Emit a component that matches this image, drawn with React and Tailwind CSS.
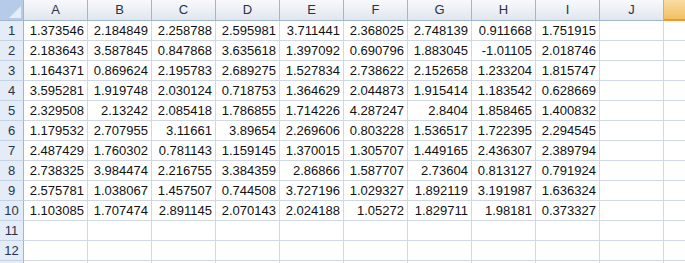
const cols = ['A', 'B', 'C', 'D', 'E', 'F', 'G', 'H', 'I', 'J'];

const data = [
  ['1.373546', '2.184849', '2.258788', '2.595981', '3.711441', '2.368025', '2.748139', '0.911668', '1.751915'],
  ['2.183643', '3.587845', '0.847868', '3.635618', '1.397092', '0.690796', '1.883045', '-1.01105', '2.018746'],
  ['1.164371', '0.869624', '2.195783', '2.689275', '1.527834', '2.738622', '2.152658', '1.233204', '1.815747'],
  ['3.595281', '1.919748', '2.030124', '0.718753', '1.364629', '2.044873', '1.915414', '1.183542', '0.628669'],
  ['2.329508', '2.13242', '2.085418', '1.786855', '1.714226', '4.287247', '2.8404', '1.858465', '1.400832'],
  ['1.179532', '2.707955', '3.11661', '3.89654', '2.269606', '0.803228', '1.536517', '1.722395', '2.294545'],
  ['2.487429', '1.760302', '0.781143', '1.159145', '1.370015', '1.305707', '1.449165', '2.436307', '2.389794'],
  ['2.738325', '3.984474', '2.216755', '3.384359', '2.86866', '1.587707', '2.73604', '0.813127', '0.791924'],
  ['2.575781', '1.038067', '1.457507', '0.744508', '3.727196', '1.029327', '1.892119', '3.191987', '1.636324'],
  ['1.103085', '1.707474', '2.891145', '2.070143', '2.024188', '1.05272', '1.829711', '1.98181', '0.373327'],
];

const rows = [];
for (let r = 0; r < 13; r++) rows.push(r < 10 ? data[r] : []);

export default function App() {
  return (
    <div
      className="w-[685px] h-[263px] overflow-hidden bg-white text-[13px] text-[#111]"
      style={{ fontFamily: '"Liberation Sans", Arial, sans-serif' }}
    >
      <div className="grid grid-cols-[24px_repeat(10,64px)_64px]">
        {/* header row */}
        <div className="relative h-[21px] bg-[#b5cbe8] border-r border-b border-[#9eb6ce]">
          <div className="absolute right-[2px] bottom-[2px] w-0 h-0 border-l-[12px] border-l-transparent border-b-[12px] border-b-[#e6edf7]" />
        </div>
        {cols.map((c) => (
          <div
            key={c}
            className="h-[21px] flex items-center justify-center bg-gradient-to-b from-[#f8f9fc] to-[#e1e6ee] border-r border-b border-[#9eb6ce] text-[#27334a]"
          >
            {c}
          </div>
        ))}
        <div className="h-[21px] bg-gradient-to-b from-[#f9dba4] to-[#f2c15f] border-b-2 border-[#f29436]" />

        {rows.map((vals, r) => (
          <Row key={r} n={r < 12 ? r + 1 : ''} vals={vals} />
        ))}
      </div>
    </div>
  );
}

function Row({ n, vals }) {
  return (
    <>
      <div className="h-[20px] flex items-center justify-center bg-[#e4ecf7] border-r border-b border-[#9eb6ce] border-b-[#c5d3e6] text-[#27334a]">
        {n}
      </div>
      {cols.map((c, i) => (
        <div
          key={c}
          className="h-[20px] flex items-center justify-end pr-[3px] border-r border-b border-[#d0d7e5]"
        >
          {vals[i] || ''}
        </div>
      ))}
      <div className="h-[20px] border-b border-[#d0d7e5]" />
    </>
  );
}
